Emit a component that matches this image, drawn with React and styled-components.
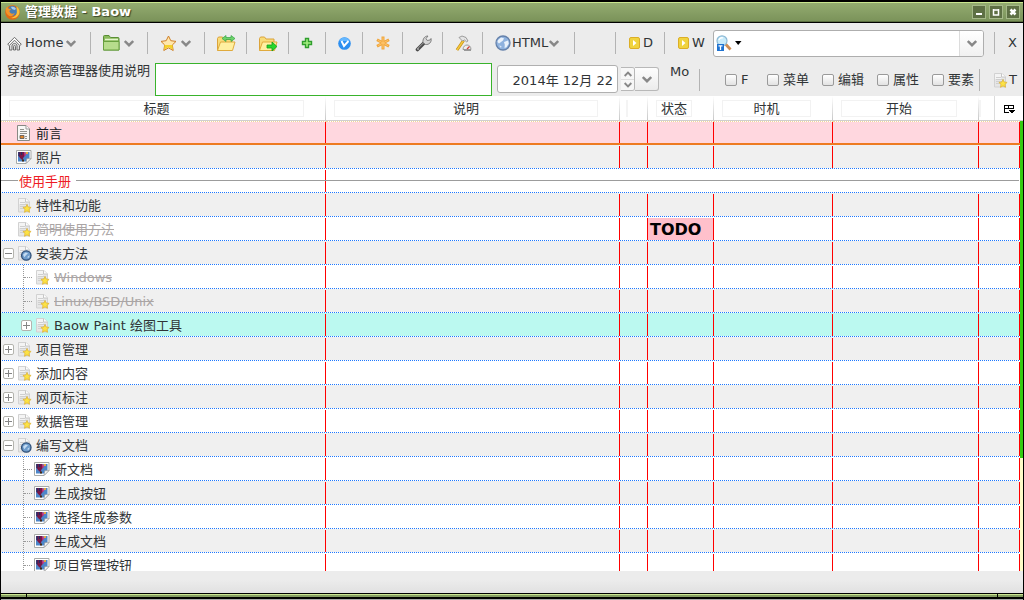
import React from "react";
import styled, { createGlobalStyle, css } from "styled-components";

const Global = createGlobalStyle`
  *, *::before, *::after { box-sizing: border-box; }
  body { margin: 0; background: #000; }
  button, input, textarea { font: inherit; color: inherit; }
  svg { flex: none; display: block; }
`;

const Window = styled.div`
  display: flex;
  flex-direction: column;
  height: 100vh;
  padding: 0 1px;
  background: #000;
  color: #303436;
  font: 13px/16px "DejaVu Sans", "Noto Sans CJK SC", sans-serif;
  overflow: hidden;
`;

const TitleBar = styled.header`
  flex: none;
  display: flex;
  align-items: center;
  height: 20px;
  margin: 2px 0 1px;
  padding: 0 3px 0 4px;
  gap: 5px;
  border-top: 1px solid #c9e58f;
  border-bottom: 1px solid #5b6f40;
  background: linear-gradient(#93ab70, #7b935a);
`;

const Title = styled.h1`
  flex: 1;
  margin: 0;
  color: #fff;
  font-size: 13px;
  font-weight: bold;
  line-height: 16px;
  text-shadow: 1px 1px 1px #3a4529;
`;

const WindowButtons = styled.div`
  display: flex;
  gap: 3px;
`;

const WindowButton = styled.button`
  display: grid;
  place-items: center;
  width: 14px;
  height: 14px;
  padding: 0;
  border: 1px solid #a5b888;
  background: #5e7044;
`;

const Chrome = styled.div`
  flex: none;
  background: #ececec;
`;

const Toolbar = styled.div`
  display: flex;
  align-items: center;
  height: 40px;
`;

const Tool = styled.button`
  flex: none;
  display: flex;
  align-items: center;
  gap: ${(p) => p.$gap || 4}px;
  width: ${(p) => p.$width}px;
  height: 28px;
  padding: 0 0 0 ${(p) => (p.$pad === undefined ? 12 : p.$pad)}px;
  border: 0;
  background: none;
  white-space: nowrap;
`;

const Divider = styled.span`
  flex: none;
  width: 1px;
  height: 22px;
  background: #b3b3b3;
`;

const Space = styled.span`
  flex: none;
  width: ${(p) => p.$width}px;
`;

const SearchBox = styled.div`
  flex: 1;
  display: flex;
  align-items: center;
  height: 27px;
  margin-right: 10px;
  padding-left: 2px;
  border: 1px solid #aeaeae;
  border-radius: 3px;
  background: #fff;
  overflow: hidden;
`;

const SearchInput = styled.input`
  flex: 1;
  min-width: 0;
  border: 0;
  outline: 0;
  background: none;
`;

const PickerButton = styled.button`
  display: grid;
  place-items: center;
  width: 24px;
  height: 25px;
  padding: 0;
  border: 0;
  border-left: 1px solid #dcdcdc;
  background: linear-gradient(#fff, #f1f1f1);
`;

const IconButton = styled.button`
  display: flex;
  align-items: center;
  gap: 3px;
  padding: 0;
  border: 0;
  background: none;
`;

const Details = styled.div`
  display: flex;
  align-items: flex-start;
  height: 33px;
`;

const DescriptionLabel = styled.label`
  width: 154px;
  padding-left: 6px;
  white-space: nowrap;
`;

const Description = styled.textarea`
  flex: 1;
  min-width: 0;
  height: 33px;
  padding: 2px;
  border: 1px solid #39b32c;
  background: #fff;
  outline: 0;
  resize: none;
`;

const DateGroup = styled.div`
  display: flex;
  align-items: center;
  height: 32px;
  margin-left: 5px;
`;

const DateInput = styled.input`
  width: 121px;
  height: 28px;
  margin-right: 3px;
  padding: 0 4px;
  border: 1px solid #b0b0b0;
  border-radius: 3px;
  background: #fff;
  text-align: right;
`;

const Spinner = styled.div`
  display: grid;
  grid-template-rows: 11px 11px;
  width: 14px;
  border: 1px solid #b8b8b8;
  border-left: 0;
  border-radius: 0 3px 3px 0;
  overflow: hidden;
`;

const SpinButton = styled.button`
  display: grid;
  place-items: center;
  padding: 0;
  border: 0;
  background: #f7f7f7;
  & + & { border-top: 1px solid #dedede; }
`;

const DropButton = styled.button`
  display: grid;
  place-items: center;
  width: 24px;
  height: 24px;
  padding: 0;
  border: 1px solid #b8b8b8;
  border-left: 0;
  border-radius: 0 3px 3px 0;
  background: linear-gradient(#fdfdfd, #ececec);
`;

const Weekday = styled.span`
  width: 40px;
  padding: 1px 0 0 11px;
`;

const Options = styled.div`
  display: flex;
  align-items: center;
  height: 33px;
`;

const Option = styled.label`
  display: flex;
  align-items: center;
  gap: 4px;
  width: ${(p) => p.$width}px;
  white-space: nowrap;
`;

const Check = styled.input`
  appearance: none;
  width: 12px;
  height: 12px;
  margin: 0;
  border: 1px solid #9a9a9a;
  border-radius: 2px;
  background: linear-gradient(#fff, #e2e2e2);
`;

const Viewport = styled.main`
  flex: 1;
  min-height: 0;
  overflow: hidden;
  background: #fff;
`;

const Table = styled.table`
  width: 100%;
  table-layout: fixed;
  border-collapse: separate;
  border-spacing: 0;
`;

const Col = styled.col`
  width: ${(p) => (p.$width ? `${p.$width}px` : "auto")};
`;

const Th = styled.th`
  height: 25px;
  padding: 4px ${(p) => (p.$narrow ? 0 : 22)}px 0 ${(p) => (p.$narrow ? 6 : 8)}px;
  border-bottom: 1px solid #cfcfcf;
  background: linear-gradient(#fff, #c8c8c8) right top / 1px 24px no-repeat;
  font-weight: normal;
  vertical-align: top;
`;

const ThLast = styled.th`
  padding: 0;
  border-bottom: 1px solid #cfcfcf;
`;

const HeadBox = styled.div`
  height: 17px;
  border: 1px solid #f2f2f2;
  line-height: 16px;
  white-space: nowrap;
`;

const HeadMark = styled.div`
  width: 2px;
  height: 17px;
  background: #f4f4f4;
`;

const LastHead = styled.div`
  display: flex;
  align-items: center;
  height: 24px;
`;

const ColumnPicker = styled.button`
  display: flex;
  justify-content: center;
  align-items: center;
  width: 29px;
  height: 24px;
  padding: 2px 0 0;
  margin-left: auto;
  border: 0;
  border-left: 1px solid #dcdcdc;
  background: none;
`;

const tones = { pink: "#ffd7df", grey: "#f0f0f0", cyan: "#bbf9f0", white: "#fff" };

const Row = styled.tr`
  background: linear-gradient(90deg, #fff 1px, #1e78ff 1px) left bottom / 2px 1px repeat-x;
`;

const Cell = styled.td`
  height: 24px;
  padding: 0;
  border-bottom: 1px solid transparent;
  background-color: ${(p) => tones[p.$tone]};
  background-image: linear-gradient(#f00, #f00);
  background-position: right 1px;
  background-size: ${(p) => (p.$plain ? 0 : 1)}px 22px;
  background-repeat: no-repeat;
  background-clip: padding-box;
  ${(p) => p.$marked && css`
    border-top: 1px dotted #f2d69a;
    border-bottom: 2px solid #ee7b22;
    background-position: right 0;
  `}
`;

const TrackCell = styled.td`
  padding: 0;
  background: linear-gradient(#33cc10 337px, #fdfbc8 337px);
`;

const TreeItem = styled.div`
  display: flex;
  align-items: center;
  height: ${(p) => (p.$marked ? 20 : 23)}px;
`;

const TwistySlot = styled.span`
  flex: none;
  display: flex;
  justify-content: flex-end;
  width: ${(p) => (p.$nested ? 18 : 15)}px;
  padding: 1px 2px 0 0;
`;

const Twisty = styled.button`
  display: grid;
  place-items: center;
  width: 11px;
  height: 11px;
  padding: 0;
  border: 1px solid #b4b4ae;
  border-radius: 2px;
  background: #fff;
`;

const Branch = styled.span`
  flex: none;
  align-self: stretch;
  width: 11px;
  margin-left: 7px;
  border-left: 1px dotted #999;
  &::before {
    content: "";
    display: block;
    width: 8px;
    margin-top: 12px;
    border-top: 1px dotted #999;
  }
`;

const Name = styled.span`
  margin-left: 4px;
  padding-top: 2px;
  white-space: nowrap;
  color: ${(p) => (p.$done ? "#aaa5a5" : p.$dark ? "#15181a" : "#303436")};
  text-decoration: ${(p) => (p.$done ? "line-through" : "none")};
`;

const Section = styled.div`
  display: flex;
  align-items: center;
  gap: 5px;
  height: 23px;
  color: #ee1c25;
  &::before, &::after { content: ""; height: 1px; background: #9c9c9c; }
  &::before { width: 17px; margin-right: -4px; }
  &::after { flex: 1; }
`;

const SectionName = styled.span`
  padding-top: 2px;
`;

const SectionRule = styled.div`
  height: 1px;
  margin-right: 1px;
  background: #9c9c9c;
`;

const Todo = styled.strong`
  display: block;
  height: 22px;
  margin-right: 1px;
  padding: 1px 0 0 2px;
  background: #ffc0cb;
  color: #000;
  font-size: 16px;
  line-height: 22px;
`;

const StatusBar = styled.footer`
  flex: none;
  height: 22px;
  background: linear-gradient(#ececec 40%, #e1e1e1);
`;

const Frame = styled.div`
  flex: none;
  display: grid;
  grid-template-columns: 25px 1fr 25px;
  gap: 1px;
  height: 7px;
  padding: 1px 0 2px;
  border-bottom: 1px solid #aaa;
`;

const Edge = styled.span`
  border-top: 1px solid #c9e58f;
  background: #869f63;
`;

const Chevron = ({ up, small }) => (
  <svg width={small ? 8 : 10} height={small ? 6 : 7} viewBox="0 0 10 7" fill="none" stroke="#888" strokeWidth="2.4">
    <path d={up ? "M.8 6 5 1.800 9.200 6" : "M.8 1 5 5.200 9.200 1"} />
  </svg>
);

const Firefox = () => (
  <svg width="15" height="15" viewBox="0 0 15 15">
    <circle cx="7.500" cy="7.500" r="7.300" fill="#e36a12" />
    <circle cx="7.500" cy="6" r="5" fill="#4a7db5" />
    <path d="M6 2c2-.8 4 0 5 2L9.500 5 7 4z" fill="#a8cbe9" />
    <path d="M.8 3.500 2.300 1.500l1 2 2.800.8-1.800 1.800c.5 2.300 3 3.600 5.500 2C8.500 11.500 5 12 3 10 1 8.500.5 6 .8 3.500z" fill="#f3942a" />
    <path d="M11.500 1.500c3 2 3.800 5.500 2.300 8.200C12 13 8 14 5 12.800c4 .2 7.300-3 6.800-6.500z" fill="#fac13c" />
  </svg>
);

const Home = () => (
  <svg width="15" height="15" viewBox="0 0 15 15" fill="none" stroke="#6e6e6e">
    <path d="m.7 8.300 6.800-7 6.800 7-1.600 1.200L7.500 4.200 2.300 9.500z" fill="#fff" />
    <path d="M2.500 9.500v4.500h2.500v-4c0-3.400 5-3.400 5 0v4h2.500V9.500M6.500 14v-3.500c0-1.400 2-1.400 2 0V14z" fill="#ddd" />
  </svg>
);

const GreenFolder = () => (
  <svg width="17" height="16" viewBox="0 0 17 16">
    <path d="M.5 15V1.500q0-1 1-1h4.500l1.500 2h7.500q1 0 1 1V15z" fill="#8aba5c" stroke="#5a8f35" />
    <path d="M2 4.500h13" stroke="#e2f5cb" strokeWidth="1.500" />
    <path d="M.5 6.500h15.500v8.500H.5z" fill="#b7dc8c" stroke="#69a03f" />
  </svg>
);

const Star = () => (
  <svg width="17" height="17" viewBox="0 0 17 17">
    <path d="m8.500 1 2.300 4.700 5.200.7-3.700 3.600.9 5.500-4.700-2.600-4.700 2.600.9-5.500L1 6.400l5.200-.7z" fill="#ffe7ac" stroke="#cf7f27" strokeLinejoin="round" />
    <path d="M4.500 10h8l.2 4.500-4.200-2.400-4.200 2.400z" fill="#f4d22c" />
  </svg>
);

const Folder = ({ both }) => (
  <svg width="19" height="17" viewBox="0 0 19 17">
    <path d="M.5 15.500v-12l1-1.500h4l1.500 2h8v3.500h1.500" fill="#f8dc79" stroke="#dba33a" />
    <path d="m.5 15.500 3-8.500h14.500l-2.500 8.500z" fill="#fff0a0" stroke="#e0aa3d" />
    {both ? (
      <path d="m5 3.500 4-3v2h5v-2l4 3-4 3v-2H9v2z" fill="#6dd36a" stroke="#35a345" strokeWidth=".7" />
    ) : (
      <path d="M8 10h5V7l5 4.500-5 4.500v-3H8z" fill="#27d82c" stroke="#139d1c" strokeWidth=".8" />
    )}
  </svg>
);

const Plus = () => (
  <svg width="12" height="12" viewBox="0 0 12 12">
    <path d="M4.500 1.500h3v3h3v3h-3v3h-3v-3h-3v-3h3z" fill="#a5ef80" stroke="#2f9e2d" strokeWidth="1.400" />
  </svg>
);

const BlueMark = () => (
  <svg width="13" height="13" viewBox="0 0 13 13">
    <circle cx="6.500" cy="6.500" r="6.300" fill="#2d8ff0" />
    <path d="M1.200 4a5.700 5.700 0 0 1 10.600 0z" fill="#64b7ff" />
    <path d="m3.500 4 2.500 5L10.500 4" fill="none" stroke="#fff" strokeWidth="1.900" />
  </svg>
);

const Asterisk = () => (
  <svg width="14" height="14" viewBox="0 0 14 14" stroke="#f0a63c">
    <path d="M7 .5v13M1 3.800l12 6.400M13 3.800 1 10.200" strokeWidth="3" />
    <path d="M7 1.500v11M2 4.400l10 5.200M12 4.400 2 9.600" stroke="#ffc56c" strokeWidth="1" />
  </svg>
);

const Wrench = () => (
  <svg width="17" height="17" viewBox="0 0 17 17">
    <path d="m2.500 14.500 7-7" stroke="#4a4a4a" strokeWidth="3.600" strokeLinecap="round" />
    <path d="m3 13.300 6-6" stroke="#a5a5a5" strokeWidth="1" />
    <path d="M8 7.500C7.500 4 9.500 1 13 1l-2 2.500 1.200 2L15 5l1-1.500c1 3.500-2 6.500-5.500 6z" fill="#d5d5d5" stroke="#777" strokeWidth=".9" />
    <circle cx="3" cy="14" r=".8" fill="#eee" />
  </svg>
);

const Hammer = () => (
  <svg width="17" height="17" viewBox="0 0 17 17">
    <path d="m2 15 6.500-9.500" stroke="#c48b13" strokeWidth="3" />
    <path d="m2 15 6.500-9.500" stroke="#f4c93d" strokeWidth="1.500" />
    <path d="m4 2.500 3-1.500 4 1.500 2 3.500-1.500.8L9.500 5 7.500 6z" fill="#e4e4e4" stroke="#888" strokeWidth=".8" />
    <path d="M8 14.500c0-6 8-6 8 0z" fill="#eee" stroke="#999" />
    <path d="m12 14 2.500-2.500" stroke="#d23b34" strokeWidth="1.200" />
    <path d="M9 15.500h7" stroke="#999" />
  </svg>
);

const Globe = () => (
  <svg width="16" height="16" viewBox="0 0 16 16">
    <circle cx="8" cy="8" r="7" fill="#8fb2de" stroke="#6581aa" strokeWidth="1.300" />
    <path d="M3 5 6 2.500l3 .8L8 5.500 6 7 4 8.500 2.500 7zM9 7l4-1.500.8 3-2.300 3.800L9.500 13l.3-3.300z" fill="#eaf2fb" />
    <path d="M4 10.500 6.500 11l-.5 2z" fill="#dce8f6" />
  </svg>
);

const Play = () => (
  <svg width="11" height="12" viewBox="0 0 11 12">
    <rect x=".5" y=".5" width="10" height="11" rx="1.500" fill="#f0d33f" stroke="#dcae26" />
    <path d="m4 3 3.500 3L4 9z" fill="#fff" />
  </svg>
);

const Lens = () => (
  <svg width="16" height="17" viewBox="0 0 16 17">
    <path d="m9.500 9 5 5.500" stroke="#cf8e55" strokeWidth="2.800" />
    <circle cx="6" cy="5.800" r="5" fill="#c9ebfa" stroke="#8db9d4" strokeWidth="1.200" />
    <path d="M3 5a3 3 0 0 1 4-2" fill="none" stroke="#fff" strokeWidth="1.300" />
    <path d="M1 9h7v7H1z" fill="#1f73d1" />
    <path d="M2.500 10.800h4M4.500 11v4" stroke="#fff" strokeWidth="1.300" />
  </svg>
);

const Caret = () => (
  <svg width="7" height="4" viewBox="0 0 7 4"><path d="M0 0h6.500L3.200 4z" fill="#000" /></svg>
);

const pageBody = (
  <>
    <path d="M2.500 1.500h7.500l3.500 3.500v10h-11z" fill="#e6e6e6" stroke="#d2d2d2" />
    <path d="M3 2h6v5H3z" fill="#f4f4f4" />
    <path d="M9.500 1.500v3.500h4" fill="#fff" stroke="#c6c6c6" />
    <path d="M4 5.500h5M4 7.500h8M4 9.500h8M4 11.500h6" stroke="#cfcfcf" />
  </>
);

const StarPage = () => (
  <svg width="16" height="16" viewBox="0 0 16 16">
    {pageBody}
    <path d="m11 7.500 1.200 2.500 2.900.4-2.100 2 .5 2.900-2.500-1.400-2.500 1.400.5-2.900-2.100-2 2.900-.4z" fill="#fbe245" stroke="#dcae2c" strokeWidth=".7" />
  </svg>
);

const GlobePage = () => (
  <svg width="16" height="16" viewBox="0 0 16 16">
    {pageBody}
    <circle cx="10.300" cy="10.500" r="4.700" fill="#6f9dcc" stroke="#2e4f78" strokeWidth="1.300" />
    <path d="m7 9.700 2.500-2.300L12 8.200l-2.500 2.500-1 1.500zM11 12.200l2.500-2-.5 2.500z" fill="#c5dcf2" />
  </svg>
);

const TextPage = () => (
  <svg width="16" height="16" viewBox="0 0 16 16">
    <path d="M1.500.5h8.500l3.500 3.500v11.500h-12z" fill="#f8f8f6" stroke="#888984" />
    <path d="M10 .5V4h3.500" fill="#fff" stroke="#999" />
    <path d="M4 4.500h4M4 6.500h7M4 8.500h7M9 11.500h2M9 13.500h2" stroke="#92938e" />
    <path d="M4 10.500h4v3H4z" fill="#e0872c" stroke="#555" strokeWidth=".8" />
  </svg>
);

const Picture = () => (
  <svg width="16" height="16" viewBox="0 0 16 16">
    <path d="M.5 1.500h14.500v8l-5 5H.5z" fill="#fff" stroke="#a8aaa8" />
    <path d="M2 3h11.500v6L10 12.500H2z" fill="#4c86c9" />
    <path d="M2.500 3h5.500l1.500 3-2 2.500L6.500 11 5 10 2.500 7z" fill="#7a1748" />
    <path d="M3 3v4M5.500 3v3" stroke="#272b65" strokeWidth="1.300" />
    <path d="m8 3 2.500 2-2 2.500z" fill="#d0378b" />
    <path d="M9.500 3h2.500v2h-2z" fill="#e5a545" />
    <path d="M6 11.500h2" stroke="#442b15" strokeWidth="2" />
    <path d="m10 14.500.8-4.800 4.200-.2z" fill="#f8f8f8" stroke="#999" strokeWidth=".7" />
  </svg>
);

const PickerIcon = () => (
  <svg width="11" height="10" viewBox="0 0 11 10" shapeRendering="crispEdges">
    <path d="M5 8.500H.5v-7h9V5M0 4.500h10M4.500 1v4" fill="none" stroke="#000" />
    <path d="M5 6h6L8 9.500z" fill="#000" />
  </svg>
);

const ToggleMark = ({ open }) => (
  <svg width="7" height="7" viewBox="0 0 7 7" stroke="#858585" shapeRendering="crispEdges">
    <path d={open ? "M0 3.500h7" : "M0 3.500h7M3.500 0v7"} />
  </svg>
);

const icons = { text: TextPage, picture: Picture, star: StarPage, globe: GlobePage };

const rows = [
  { name: "前言", icon: "text", tone: "pink", marked: true },
  { name: "照片", icon: "picture", tone: "grey" },
  { name: "使用手册", section: true, tone: "white" },
  { name: "特性和功能", icon: "star", tone: "grey" },
  { name: "简明使用方法", icon: "star", tone: "white", done: true, state: "TODO" },
  { name: "安装方法", icon: "globe", tone: "grey", toggle: "open" },
  { name: "Windows", icon: "star", tone: "white", nested: true, done: true },
  { name: "Linux/BSD/Unix", icon: "star", tone: "grey", nested: true, done: true },
  { name: "Baow Paint 绘图工具", icon: "star", tone: "cyan", nested: true, toggle: "closed" },
  { name: "项目管理", icon: "star", tone: "grey", toggle: "closed" },
  { name: "添加内容", icon: "star", tone: "white", toggle: "closed" },
  { name: "网页标注", icon: "star", tone: "grey", toggle: "closed" },
  { name: "数据管理", icon: "star", tone: "white", toggle: "closed" },
  { name: "编写文档", icon: "globe", tone: "grey", toggle: "open" },
  { name: "新文档", icon: "picture", tone: "white", nested: true },
  { name: "生成按钮", icon: "picture", tone: "grey", nested: true },
  { name: "选择生成参数", icon: "picture", tone: "white", nested: true },
  { name: "生成文档", icon: "picture", tone: "grey", nested: true },
  { name: "项目管理按钮", icon: "picture", tone: "white", nested: true },
];

const options = [["F", 42], ["菜单", 55], ["编辑", 55], ["属性", 55], ["要素", 47]];

function TreeCell({ row }) {
  const Icon = icons[row.icon];
  const twisty = row.toggle && (
    <Twisty aria-label={row.name}><ToggleMark open={row.toggle === "open"} /></Twisty>
  );
  return (
    <TreeItem $marked={row.marked}>
      <TwistySlot>{!row.nested && twisty}</TwistySlot>
      {row.nested && (row.toggle ? <TwistySlot $nested>{twisty}</TwistySlot> : <Branch />)}
      <Icon />
      <Name $done={row.done} $dark={row.marked}>{row.name}</Name>
    </TreeItem>
  );
}

function DataRow({ row, first }) {
  const look = { $tone: row.tone, $marked: row.marked };
  return (
    <Row>
      {row.section ? (
        <>
          <Cell {...look}><Section><SectionName>{row.name}</SectionName></Section></Cell>
          <Cell {...look} $plain colSpan={6}><SectionRule /></Cell>
        </>
      ) : (
        <>
          <Cell {...look}><TreeCell row={row} /></Cell>
          <Cell {...look} />
          <Cell {...look} />
          <Cell {...look}>{row.state && <Todo>{row.state}</Todo>}</Cell>
          <Cell {...look} />
          <Cell {...look} />
          <Cell {...look} />
        </>
      )}
      {first && <TrackCell rowSpan={rows.length} />}
    </Row>
  );
}

export default function App() {
  return (
    <Window>
      <Global />
      <TitleBar>
        <Firefox />
        <Title>管理数据 - Baow</Title>
        <WindowButtons>
          <WindowButton aria-label="Minimize">
            <svg width="8" height="8"><path d="M1 6h6" stroke="#fff" strokeWidth="2" /></svg>
          </WindowButton>
          <WindowButton aria-label="Maximize">
            <svg width="8" height="8"><path d="M1 2h6M1.500 1v6h5V1" fill="none" stroke="#fff" strokeWidth="1.500" /></svg>
          </WindowButton>
          <WindowButton aria-label="Close">
            <svg width="8" height="8"><path d="m1.500 1.500 5 5m0-5-5 5" stroke="#fff" strokeWidth="2.500" /></svg>
          </WindowButton>
        </WindowButtons>
      </TitleBar>

      <Chrome>
        <Toolbar>
          <Tool $width={89} $pad={6} $gap={3}><Home />Home<Chevron /></Tool>
          <Divider />
          <Tool $width={56} aria-label="Folders"><GreenFolder /><Chevron /></Tool>
          <Divider />
          <Tool $width={56} aria-label="Favorites"><Star /><Chevron /></Tool>
          <Divider />
          <Tool $width={41} aria-label="Swap folder"><Folder both /></Tool>
          <Divider />
          <Tool $width={41} aria-label="Move to folder"><Folder /></Tool>
          <Divider />
          <Tool $width={36} aria-label="Add"><Plus /></Tool>
          <Divider />
          <Tool $width={36} aria-label="Check"><BlueMark /></Tool>
          <Divider />
          <Tool $width={39} $pad={13} aria-label="New"><Asterisk /></Tool>
          <Divider />
          <Tool $width={39} aria-label="Settings"><Wrench /></Tool>
          <Divider />
          <Tool $width={39} aria-label="Build"><Hammer /></Tool>
          <Divider />
          <Tool $width={91} $gap={1}><Globe />HTML<Chevron /></Tool>
          <Divider />
          <Space $width={40} />
          <Divider />
          <Tool $width={48} $pad={13} $gap={3}><Play />D</Tool>
          <Divider />
          <Tool $width={48} $pad={13} $gap={3}><Play />W</Tool>
          <SearchBox>
            <IconButton aria-label="Search type"><Lens /><Caret /></IconButton>
            <SearchInput aria-label="Search" />
            <PickerButton aria-label="Search history"><Chevron /></PickerButton>
          </SearchBox>
          <Divider />
          <Tool $width={28} $pad={13}>X</Tool>
        </Toolbar>

        <Details>
          <DescriptionLabel htmlFor="description">穿越资源管理器使用说明</DescriptionLabel>
          <Description id="description" />
          <DateGroup>
            <DateInput aria-label="Date" defaultValue="2014年 12月 22" />
            <Spinner>
              <SpinButton aria-label="Later"><Chevron up small /></SpinButton>
              <SpinButton aria-label="Earlier"><Chevron small /></SpinButton>
            </Spinner>
            <DropButton aria-label="Calendar"><Chevron /></DropButton>
          </DateGroup>
          <Weekday>Mo</Weekday>
          <Options>
            <Divider />
            <Space $width={25} />
            {options.map(([label, width]) => (
              <Option key={label} $width={width}><Check type="checkbox" />{label}</Option>
            ))}
            <Divider />
            <Tool $width={43} $gap={1}><StarPage />T</Tool>
          </Options>
        </Details>
      </Chrome>

      <Viewport>
        <Table>
          <colgroup>
            <Col $width={325} /><Col /><Col $width={28} /><Col $width={66} />
            <Col $width={119} /><Col $width={146} /><Col $width={41} /><Col $width={3} />
          </colgroup>
          <thead>
            <tr>
              <Th><HeadBox>标题</HeadBox></Th>
              <Th><HeadBox>说明</HeadBox></Th>
              <Th $narrow><HeadMark /></Th>
              <Th><HeadBox>状态</HeadBox></Th>
              <Th><HeadBox>时机</HeadBox></Th>
              <Th><HeadBox>开始</HeadBox></Th>
              <ThLast colSpan={2}>
                <LastHead>
                  <HeadMark />
                  <ColumnPicker aria-label="Columns"><PickerIcon /></ColumnPicker>
                </LastHead>
              </ThLast>
            </tr>
          </thead>
          <tbody>
            {rows.map((row, i) => <DataRow key={row.name} row={row} first={i === 0} />)}
          </tbody>
        </Table>
      </Viewport>

      <StatusBar />
      <Frame><Edge /><Edge /><Edge /></Frame>
    </Window>
  );
}
